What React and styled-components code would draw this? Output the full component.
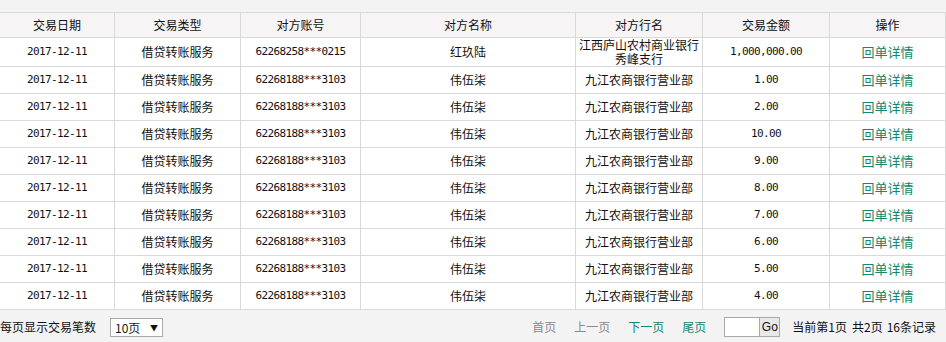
import React from "react";
import styled, { createGlobalStyle } from "styled-components";

const Global = createGlobalStyle`
  html, body { margin: 0; padding: 0; background: #f3f3f3; }
  body { font-family: "Noto Sans CJK SC", "Noto Sans", sans-serif; font-size: 12px; color: #1a1a1a; overflow: hidden; }
`;

const Page = styled.div`
  padding-top: 12px;
  width: 946px;
`;

const Table = styled.table`
  border-collapse: collapse;
  table-layout: fixed;
  width: 946px;
  margin-left: -1px;
  background: #fff;
`;

const Th = styled.th`
  height: 24px;
  padding: 0;
  border: 1px solid #d9d9d9;
  background: #f6f4f4;
  font-weight: normal;
  font-size: 12px;
  line-height: 14px;
  text-align: center;
  color: #111;
`;

const Td = styled.td`
  height: ${(p) => (p.$tall ? "28px" : "26px")};
  padding: 0;
  border: 1px solid #d9d9d9;
  text-align: center;
  font-size: 12px;
  line-height: 14px;
  color: #111;
  font-family: ${(p) =>
    p.$mono
      ? '"DejaVu Sans Mono", "Liberation Mono", monospace'
      : '"Noto Sans CJK SC", "Noto Sans", sans-serif'};
  ${(p) => (p.$mono ? "font-size: 11px; letter-spacing: -0.62px;" : "")}
`;

const BankLine = styled.div`
  line-height: 14px;
  height: 14px;
  overflow: visible;
`;

const Link = styled.a`
  color: ${(p) => (p.$muted ? "#8a8a8a" : "#12876a")};
  text-decoration: none;
  font-size: ${(p) => (p.$big ? "13px" : "12px")};
  cursor: pointer;
`;

const Footer = styled.div`
  display: flex;
  align-items: center;
  height: 33px;
  padding-right: 10px;
`;

const Label = styled.span`
  font-size: 12px;
  color: #111;
`;

const Select = styled.div`
  margin-left: 14px;
  width: 53px;
  height: 19px;
  box-sizing: border-box;
  border: 1px solid #a9a9a9;
  background: #fff;
  display: flex;
  align-items: center;
  padding: 0 4px;
  font-size: 12px;
  justify-content: space-between;
  margin-top: 1px;
`;

const Arrow = styled.span`
  font-size: 8px;
  color: #111;
`;

const Pager = styled.div`
  margin-left: auto;
  display: flex;
  align-items: center;
`;

const PageLinks = styled.div`
  display: flex;
  gap: 18px;
  margin-right: 18px;
`;

const Input = styled.div`
  width: 36px;
  height: 20px;
  box-sizing: border-box;
  border: 1px solid #a9a9a9;
  background: #fff;
`;

const GoButton = styled.div`
  width: 20px;
  height: 20px;
  box-sizing: border-box;
  border: 1px solid #a9a9a9;
  border-left: none;
  background: #e8e8e8;
  font-family: "Liberation Sans", Arial, sans-serif;
  font-size: 12px;
  display: flex;
  align-items: center;
  justify-content: center;
  color: #111;
  margin-right: 12px;
`;

const Info = styled.span`
  font-size: 12px;
  color: #111;
  margin-right: ${(p) => p.$mr || 0}px;
`;

const cols = [115, 126, 120, 215, 127, 127, 116];
const headers = ["交易日期", "交易类型", "对方账号", "对方名称", "对方行名", "交易金额", "操作"];

const rows = [
  { acct: "62268258***0215", name: "红玖陆", bank: ["江西庐山农村商业银行", "秀峰支行"], amt: "1,000,000.00" },
  ...["1.00", "2.00", "10.00", "9.00", "8.00", "7.00", "6.00", "5.00", "4.00"].map((a) => ({
    acct: "62268188***3103",
    name: "伟伍柒",
    bank: ["九江农商银行营业部"],
    amt: a,
  })),
];

export default function App() {
  return (
    <Page>
      <Global />
      <Table>
        <colgroup>
          {cols.map((w, i) => (
            <col key={i} style={{ width: w }} />
          ))}
        </colgroup>
        <thead>
          <tr>
            {headers.map((h) => (
              <Th key={h}>{h}</Th>
            ))}
          </tr>
        </thead>
        <tbody>
          {rows.map((r, i) => {
            const tall = r.bank.length > 1;
            return (
              <tr key={i}>
                <Td $tall={tall} $mono>2017-12-11</Td>
                <Td $tall={tall}>借贷转账服务</Td>
                <Td $tall={tall} $mono>{r.acct}</Td>
                <Td $tall={tall}>{r.name}</Td>
                <Td $tall={tall}>
                  {r.bank.map((b, j) => (
                    <BankLine key={j}>{b}</BankLine>
                  ))}
                </Td>
                <Td $tall={tall} $mono>{r.amt}</Td>
                <Td $tall={tall}>
                  <Link $big>回单详情</Link>
                </Td>
              </tr>
            );
          })}
        </tbody>
      </Table>
      <Footer>
        <Label>每页显示交易笔数</Label>
        <Select>
          <span>10页</span>
          <Arrow>▼</Arrow>
        </Select>
        <Pager>
          <PageLinks>
            <Link $muted>首页</Link>
            <Link $muted>上一页</Link>
            <Link>下一页</Link>
            <Link>尾页</Link>
          </PageLinks>
          <Input />
          <GoButton>Go</GoButton>
          <Info $mr={5}>当前第1页</Info>
          <Info $mr={4}>共2页</Info>
          <Info>16条记录</Info>
        </Pager>
      </Footer>
    </Page>
  );
}
